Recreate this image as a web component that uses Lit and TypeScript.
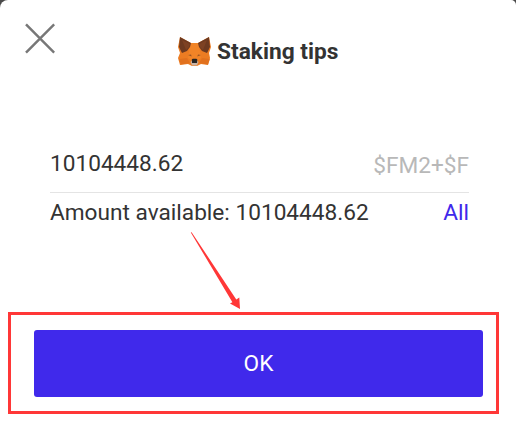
import { LitElement, html, css } from "lit";
import { customElement } from "lit/decorators.js";

@customElement("app-root")
export class AppRoot extends LitElement {
  static styles = css`
    :host {
      display: block;
      position: relative;
      width: 516px;
      height: 421px;
      overflow: hidden;
      background: #4a4a4a;
      font-family: Roboto, "Liberation Sans", sans-serif;
      font-size: 22.65px;
      color: #333;
    }
    .sheet {
      box-sizing: border-box;
      height: 421px;
      padding: 23px 33px 0 25px;
      display: flex;
      flex-direction: column;
      background: #fff;
      border-radius: 8px 5px 0 0;
    }
    header {
      display: grid;
      grid-template-columns: 153px auto;
      height: 118px;
      align-items: start;
    }
    .title {
      display: flex;
      align-items: flex-start;
      gap: 6px;
      padding-top: 13px;
    }
    h1 {
      margin: 3px 0 0;
      font-size: 22.7px;
      line-height: 26px;
      font-weight: 700;
      white-space: nowrap;
    }
    svg {
      display: block;
    }
    .form {
      margin: 0 14px 0 25px;
      width: 419px;
    }
    .row {
      display: flex;
      justify-content: space-between;
      white-space: nowrap;
    }
    .amount {
      height: 52px;
      box-sizing: border-box;
      padding-top: 8px;
      line-height: 29px;
      border-bottom: 1px solid #e4e4e4;
    }
    .unit {
      color: #b8b8b8;
      padding-top: 2px;
    }
    .available {
      line-height: 29px;
      padding-top: 5px;
    }
    .all {
      color: #4029eb;
    }
    .ok {
      margin: 103px 0 0 9px;
      width: 449px;
      height: 67px;
      flex: none;
      border: 0;
      border-radius: 3px;
      padding: 0;
      background: #4029eb;
      color: #fff;
      font: inherit;
    }
    .frame {
      position: absolute;
      left: 8px;
      top: 312px;
      width: 485px;
      height: 96px;
      border: 3px solid #ff3737;
    }
    .arrow {
      position: absolute;
      left: 190px;
      top: 231px;
    }
  `;

  render() {
    return html`
      <section class="sheet">
        <header>
          <svg width="30" height="32" viewBox="0 0 30 32" fill="none" stroke="#777" stroke-width="2.5">
            <path d="M1 1.4 29.2 29.6M29.2 1.4 1 29.6" />
          </svg>
          <div class="title">
            <svg width="33" height="31" viewBox="0 0 33 31">
              <path fill="#ec7c22" d="M2 1 13 7h7L31 1l2 10-2 6 1 5-2 7-7-1-4 2h-5l-4-2-8 1-2-7 2-5-2-6z" />
              <path fill="#f58b2b" d="M13 7h7l2 8 1 7-4 3h-5l-4-3 1-7z" opacity=".55" />
              <path fill="#6d3a20" d="M2 1 13 7l-1 4-3 4-5 2-3-6zM31 1 20 7l1 4 3 4 5 2 3-6z" />
              <path fill="#8e4a25" d="m4 4 8 4-1 3-3 3zM29 4l-8 4 1 3 3 3z" opacity=".5" />
              <path fill="#dd6c1c" d="m1 23 8-1 3 5-9 1.5zM32 23l-8-1-3 5 9 1.5z" opacity=".7" />
              <path fill="#9a5523" d="m10 19 3-.5.7 2zM23 19l-3-.5-.7 2z" />
              <path fill="#c9b3a4" d="m12.5 26 2-2h4l2 2-1.7 3.5h-4.6z" />
              <path fill="#292522" d="m13.8 23.6 1-.8h3.5l1 .8-.2 3.3h-5z" />
            </svg>
            <h1>Staking tips</h1>
          </div>
        </header>
        <div class="form">
          <div class="row amount"><span>10104448.62</span><span class="unit">$FM2+$F</span></div>
          <div class="row available"><span>Amount available: 10104448.62</span><span class="all">All</span></div>
        </div>
        <button class="ok">OK</button>
      </section>
      <div class="frame"></div>
      <svg class="arrow" width="52" height="80" viewBox="0 0 52 80" fill="#ff3737">
        <path d="M.8 1.5 1.6 1.2 46.3 68.4 49.3 66.6 50 78 40 72.6 42.4 71.2z" />
      </svg>
    `;
  }
}
